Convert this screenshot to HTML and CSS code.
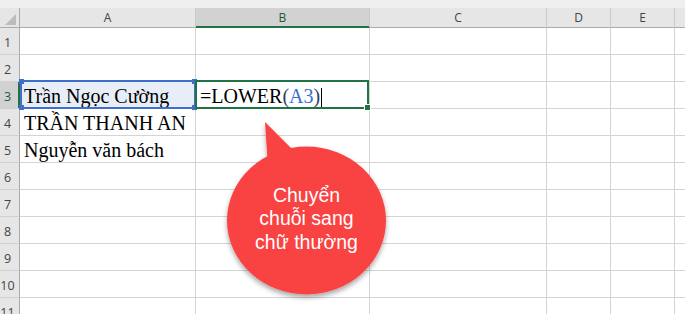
FILE: index.html
```html
<!DOCTYPE html>
<html lang="vi">
<head>
<meta charset="utf-8">
<title>LOWER</title>
<link rel="stylesheet" href="styles.css">
</head>
<body>
<div class="page">
  <div class="topbar"></div>
  <div class="sheet">
    <div class="corner"><svg class="tri" width="20" height="20" viewBox="0 0 20 20"><polygon points="5,17 16,17 16,6" fill="#bcbcbc"/></svg></div>
    <div class="colhead">A</div>
    <div class="colhead active-col">B</div>
    <div class="colhead">C</div>
    <div class="colhead">D</div>
    <div class="colhead">E</div>
    <div class="colhead last"></div>

    <div class="rowhead">1</div><div class="cell"></div><div class="cell"></div><div class="cell"></div><div class="cell"></div><div class="cell"></div><div class="cell last"></div>
    <div class="rowhead">2</div><div class="cell"></div><div class="cell"></div><div class="cell"></div><div class="cell"></div><div class="cell"></div><div class="cell last"></div>
    <div class="rowhead active-row">3</div>
    <div class="cell ref"><span class="val">Trần Ngọc Cường</span><div class="ref-box"><i class="h tl"></i><i class="h tr"></i><i class="h bl"></i><i class="h br"></i></div></div>
    <div class="cell edit"><span class="val">=LOWER<span class="par">(</span><span class="refc">A3</span><span class="par">)</span><span class="caret"></span></span><div class="active-box"><i class="fill"></i></div></div>
    <div class="cell"></div><div class="cell"></div><div class="cell"></div><div class="cell last"></div>
    <div class="rowhead">4</div><div class="cell"><span class="val">TRẦN THANH AN</span></div><div class="cell"></div><div class="cell"></div><div class="cell"></div><div class="cell"></div><div class="cell last"></div>
    <div class="rowhead">5</div><div class="cell"><span class="val">Nguyễn văn bách</span></div><div class="cell"></div><div class="cell"></div><div class="cell"></div><div class="cell"></div><div class="cell last"></div>
    <div class="rowhead">6</div><div class="cell"></div><div class="cell"></div><div class="cell"></div><div class="cell"></div><div class="cell"></div><div class="cell last"></div>
    <div class="rowhead">7</div><div class="cell"></div><div class="cell"></div><div class="cell"></div><div class="cell"></div><div class="cell"></div><div class="cell last"></div>
    <div class="rowhead">8</div><div class="cell"></div><div class="cell"></div><div class="cell"></div><div class="cell"></div><div class="cell"></div><div class="cell last"></div>
    <div class="rowhead">9</div><div class="cell"></div><div class="cell"></div><div class="cell"></div><div class="cell"></div><div class="cell"></div><div class="cell last"></div>
    <div class="rowhead">10</div><div class="cell"></div><div class="cell"></div><div class="cell"></div><div class="cell"></div><div class="cell"></div><div class="cell last"></div>
    <div class="rowhead">11</div><div class="cell"></div><div class="cell"></div><div class="cell"></div><div class="cell"></div><div class="cell"></div><div class="cell last"></div>
  </div>

  <div class="bubble">
    <svg class="bubble-shape" width="180" height="195" viewBox="0 0 180 195">
      <defs>
        <filter id="sh" x="-20%" y="-20%" width="140%" height="140%">
          <feDropShadow dx="0" dy="3" stdDeviation="2.5" flood-color="#000" flood-opacity="0.35"/>
        </filter>
      </defs>
      <g filter="url(#sh)" fill="#f94343">
        <ellipse cx="86.5" cy="105.5" rx="79.5" ry="74"/>
        <polygon points="45,7 48,52 78,40"/>
      </g>
    </svg>
    <div class="bubble-text">Chuyển<br>chuỗi sang<br>chữ thường</div>
  </div>
</div>
</body>
</html>
```

FILE: styles.css
```css
html, body {
  margin: 0;
  padding: 0;
  background: #ffffff;
}

.page {
  position: relative;
  width: 685px;
  height: 314px;
  overflow: hidden;
}

.topbar {
  height: 8px;
  background: #efefef;
}

.sheet {
  display: grid;
  grid-template-columns: 20px 176px 174px 177px 64px 64px 1fr;
  grid-template-rows: 20px repeat(11, 27px);
}

.sheet > div {
  box-sizing: border-box;
}

.corner {
  position: relative;
  background: #e6e6e6;
  border-right: 1px solid #ababab;
  border-bottom: 1px solid #ababab;
}

.tri {
  display: block;
}

.colhead {
  background: #e6e6e6;
  border-right: 1px solid #c9c9c9;
  border-bottom: 1px solid #ababab;
  display: flex;
  align-items: center;
  justify-content: center;
  font-family: "Open Sans", "Noto Sans", sans-serif;
  font-size: 12px;
  color: #444444;
  line-height: 1;
}

.colhead.last {
  border-right: none;
}

.colhead.active-col {
  background: #d2d2d2;
  color: #1e5a38;
  border-bottom: 1px solid #217346;
  box-shadow: inset 0 -1px 0 #217346;
}

.rowhead {
  background: #e6e6e6;
  border-right: 1px solid #ababab;
  border-bottom: 1px solid #d0d0d0;
  display: flex;
  align-items: flex-end;
  justify-content: center;
  padding: 0 4px 4px 0;
  font-family: "Open Sans", "Noto Sans", sans-serif;
  font-size: 12.5px;
  color: #444444;
  line-height: 14px;
}

.rowhead.active-row {
  background: #d2d2d2;
  color: #1e5a38;
  border-right: 1px solid #217346;
  box-shadow: inset -1px 0 0 #217346;
}

.cell {
  position: relative;
  border-right: 1px solid #d4d4d4;
  border-bottom: 1px solid #d4d4d4;
  display: flex;
  align-items: flex-end;
  padding: 0 0 2px 4px;
  font-family: "Liberation Serif", "Times New Roman", serif;
  font-size: 20px;
  line-height: 20px;
  color: #000000;
  white-space: nowrap;
}

.cell.last {
  border-right: none;
}

.val {
  position: relative;
  z-index: 2;
  display: inline-flex;
  align-items: flex-end;
}

.cell.ref {
  background: #e8eef8;
}

.ref-box {
  position: absolute;
  left: 0;
  top: -2px;
  right: -1px;
  bottom: -1px;
  border: 2px solid #3e6fcf;
  z-index: 3;
}

.ref-box .h {
  position: absolute;
  width: 5px;
  height: 5px;
  background: #3e6fcf;
}

.h.tl { left: -3px; top: -3px; }
.h.tr { right: -3px; top: -3px; }
.h.bl { left: -3px; bottom: -3px; }
.h.br { right: -3px; bottom: -3px; }

.active-box {
  position: absolute;
  left: -1px;
  top: -2px;
  right: 0;
  bottom: -1px;
  border: 2px solid #217346;
  z-index: 4;
}

.active-box .fill {
  position: absolute;
  right: -4px;
  bottom: -4px;
  width: 5px;
  height: 5px;
  background: #217346;
  border: 1px solid #ffffff;
}

.refc {
  color: #3a6fd2;
}

.par {
  color: #2f3f63;
}

.caret {
  display: inline-block;
  width: 1px;
  height: 19px;
  margin: 0 0 0 1px;
  background: #000000;
  position: relative;
  top: 1px;
}

.bubble {
  position: absolute;
  left: 220px;
  top: 115px;
  width: 180px;
  height: 195px;
  z-index: 10;
}

.bubble-shape {
  display: block;
}

.bubble-text {
  position: absolute;
  left: 0;
  top: 69px;
  width: 173px;
  text-align: center;
  font-family: "Liberation Sans", Arial, sans-serif;
  font-size: 19.5px;
  line-height: 23.3px;
  color: #ffffff;
}
```
